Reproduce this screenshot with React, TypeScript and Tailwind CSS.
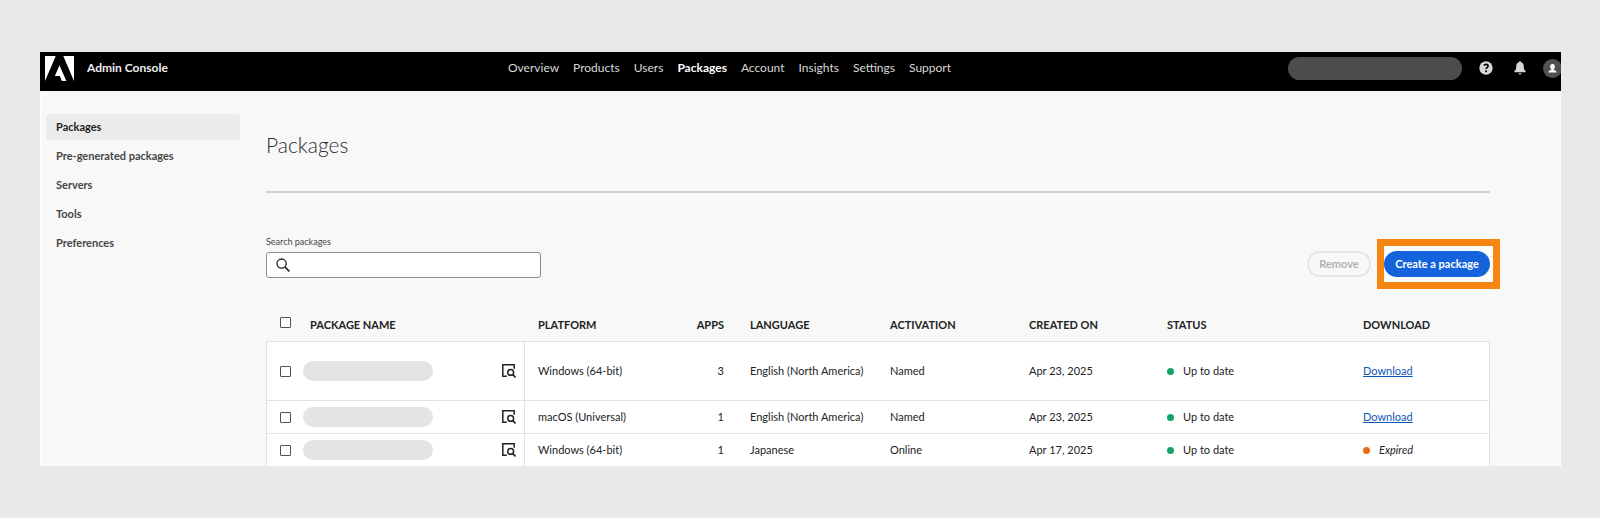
import React from "react";

const NAV = ["Overview", "Products", "Users", "Packages", "Account", "Insights", "Settings", "Support"];
const SIDE = ["Packages", "Pre-generated packages", "Servers", "Tools", "Preferences"];

type Row = {
  platform: string;
  apps: number;
  language: string;
  activation: string;
  created: string;
  expired?: boolean;
  height: string;
};

const ROWS: Row[] = [
  { platform: "Windows (64-bit)", apps: 3, language: "English (North America)", activation: "Named", created: "Apr 23, 2025", height: "h-[59px]" },
  { platform: "macOS (Universal)", apps: 1, language: "English (North America)", activation: "Named", created: "Apr 23, 2025", height: "h-[33px]" },
  { platform: "Windows (64-bit)", apps: 1, language: "Japanese", activation: "Online", created: "Apr 17, 2025", expired: true, height: "h-[33px]" },
];

function AdobeLogo() {
  return (
    <svg viewBox="0 1.376 24 21.248" preserveAspectRatio="none" className="h-[25px] w-[29px]" fill="#fff" aria-hidden="true">
      <path d="M13.966 22.624l-1.69-4.281H8.122l3.892-9.144 5.662 13.425zM8.884 1.376H0v21.248zm6.232 0H24v21.248z" />
    </svg>
  );
}

function HelpIcon() {
  return (
    <svg viewBox="0 0 14 14" className="size-[14px]" aria-hidden="true">
      <circle cx="7" cy="7" r="6.7" fill="#d6d6d6" />
      <path d="M4.9 4.6C5.4 3.7 6.1 3.4 7 3.4c1.2 0 2.1.6 2.1 1.7 0 1.5-2 1.5-2 3" fill="none" stroke="#000" strokeWidth="1.6" />
      <circle cx="7.1" cy="10.3" r="1" fill="#000" />
    </svg>
  );
}

function BellIcon() {
  return (
    <svg viewBox="0 0 12 14" className="h-[14px] w-3" fill="#d6d6d6" aria-hidden="true">
      <path d="M6 .3c.7 0 1 .4 1 1 1.9.5 2.8 2 2.8 4 0 3 .6 4 2 5.1v.9H.2v-.9c1.4-1.1 2-2.1 2-5.1 0-2 .9-3.5 2.8-4 0-.6.3-1 1-1zM4.6 12.3h2.8c-.1.8-.7 1.3-1.4 1.3s-1.3-.5-1.4-1.3z" />
    </svg>
  );
}

function Avatar() {
  return (
    <svg viewBox="0 0 19 19" className="size-[19px]" aria-hidden="true">
      <circle cx="9.5" cy="9.5" r="9.5" fill="#505050" />
      <path d="M9.5 5c1.5 0 2.4 1 2.4 2.5 0 1.3-.5 2-1.2 2.7v.8c1.6.3 2.8.8 3 2.6H5.3c.2-1.8 1.4-2.3 3-2.6v-.8c-.7-.7-1.2-1.4-1.2-2.7C7.1 6 8 5 9.5 5z" fill="#fff" />
    </svg>
  );
}

function PreviewIcon() {
  return (
    <svg viewBox="0 0 14 14" className="size-[14px]" fill="none" stroke="#222" strokeWidth="1.5" aria-hidden="true">
      <path d="M4.8 12.2H.8V.8h11.4v4" />
      <circle cx="8.7" cy="8.4" r="2.9" />
      <path d="M10.8 10.5l2.7 2.9" strokeWidth="1.7" />
    </svg>
  );
}

function Box({ label }: { label: string }) {
  return (
    <input
      type="checkbox"
      aria-label={label}
      className="block size-[11px] appearance-none rounded-[1px] border border-[#505050] bg-white checked:bg-[#1463dc]"
    />
  );
}

export default function App() {
  const cell = "border-t border-[#e1e1e1] px-[13px]";
  return (
    <div className="min-h-screen bg-[#e9e9e9] pt-[52px] pr-[39px] pb-[52px] pl-10 font-['Lato','Noto_Sans',sans-serif] text-[11px] leading-4 text-[#222]">
      <div className="overflow-hidden bg-[#f8f8f8]">
        <header className="flex h-[39px] items-center justify-between overflow-hidden bg-black pb-[7px] pl-[5px]">
          <div className="flex shrink-0 items-center">
            <div className="flex w-[463px] items-center gap-[13px]">
              <AdobeLogo />
              <span className="text-xs font-bold text-[#f0f0f0]">Admin Console</span>
            </div>
            <nav className="flex gap-[14px] text-xs" aria-label="Main">
              {NAV.map((n) => (
                <a key={n} href="#" className={n === "Packages" ? "font-bold text-white" : "text-[#d8d8d8]"}>
                  {n}
                </a>
              ))}
            </nav>
          </div>
          <div className="-mr-px flex shrink-0 items-center">
            <div className="mr-[17px] h-[23px] w-[174px] rounded-full bg-[#4c4c4c]" />
            <button className="mr-[21px]" aria-label="Help"><HelpIcon /></button>
            <button className="mr-[17px]" aria-label="Notifications"><BellIcon /></button>
            <button aria-label="Account"><Avatar /></button>
          </div>
        </header>

        <div className="flex border-x border-white">
          <aside className="w-[225px] shrink-0 pt-[23px] pr-[26px] pl-[5px]">
            <ul className="flex flex-col gap-[3px]">
              {SIDE.map((s, i) => (
                <li key={s}>
                  <a
                    href="#"
                    className={
                      i === 0
                        ? "flex h-[26px] items-center rounded bg-[#ebebeb] px-[10px] font-bold text-[#222]"
                        : "flex h-[26px] items-center rounded px-[10px] font-bold text-[#464646]"
                    }
                  >
                    {s}
                  </a>
                </li>
              ))}
            </ul>
          </aside>

          <main className="min-w-0 flex-1 pr-[70px]">
            <h1 className="pt-10 text-[21px] leading-7 font-light text-[#2c2c2c]">Packages</h1>
            <hr className="mt-8 border-t-2 border-[#d0d0d0]" />

            <div className="mt-[41px] flex items-start justify-between">
              <div className="w-[275px]">
                <label htmlFor="search" className="block text-[9px] leading-4 text-[#464646]">Search packages</label>
                <div className="mt-[2px] flex h-[26px] items-center rounded-[3px] border border-[#8c8c8c] bg-white pl-[9px]">
                  <svg viewBox="0 0 14 14" className="size-[14px] shrink-0" fill="none" stroke="#222" strokeWidth="1.3" aria-hidden="true">
                    <circle cx="5.6" cy="5.6" r="4.6" />
                    <path d="M9 9l4.3 4.3" strokeWidth="1.7" />
                  </svg>
                  <input id="search" type="search" className="min-w-0 flex-1 px-2 outline-none" />
                </div>
              </div>
              <div className="flex items-center gap-[13px] pt-[17px]">
                <button disabled className="h-[26px] w-16 rounded-full border-2 border-[#e6e6e6] font-bold text-[#b1b1b1]">Remove</button>
                <div className="relative">
                  <div className="absolute -top-3 -right-[10px] -bottom-3 -left-[7px] border-7 border-[#f68511] bg-[#fbfbfb]" />
                  <button className="relative h-[26px] w-[106px] rounded-full bg-[#1463dc] font-bold whitespace-nowrap text-white">Create a package</button>
                </div>
              </div>
            </div>

            <table className="mt-[30px] w-full table-fixed border-separate border-spacing-0 text-left">
              <colgroup>
                <col className="w-[37px]" />
                <col className="w-[222px]" />
                <col className="w-[140px]" />
                <col className="w-[72px]" />
                <col className="w-[140px]" />
                <col className="w-[139px]" />
                <col className="w-[138px]" />
                <col className="w-[196px]" />
                <col />
              </colgroup>
              <thead>
                <tr className="h-[33px]">
                  <th className="pb-1 pl-[14px]"><Box label="Select all packages" /></th>
                  <th className="pl-[7px]">PACKAGE NAME</th>
                  <th className="px-[13px]">PLATFORM</th>
                  <th className="px-[13px] text-right">APPS</th>
                  <th className="px-[13px]">LANGUAGE</th>
                  <th className="px-[13px]">ACTIVATION</th>
                  <th className="px-[13px]">CREATED ON</th>
                  <th className="px-[13px]">STATUS</th>
                  <th className="px-[13px]">DOWNLOAD</th>
                </tr>
              </thead>
              <tbody className="whitespace-nowrap">
                {ROWS.map((r, i) => (
                  <tr key={i} className={`bg-white ${r.height}`}>
                    <td className="border-t border-l border-[#e1e1e1] pl-[13px]"><Box label={`Select package ${i + 1}`} /></td>
                    <td className="border-t border-r border-[#e1e1e1] pr-2">
                      <div className="flex items-center justify-between">
                        <span className="h-5 w-[130px] rounded-full bg-[#e4e4e4]" />
                        <button aria-label="View details"><PreviewIcon /></button>
                      </div>
                    </td>
                    <td className={cell}>{r.platform}</td>
                    <td className={`${cell} text-right`}>{r.apps}</td>
                    <td className={cell}>{r.language}</td>
                    <td className={cell}>{r.activation}</td>
                    <td className={cell}>{r.created}</td>
                    <td className={cell}>
                      <span className="flex items-center gap-[9px]">
                        <span className="size-[7px] rounded-full bg-[#12a26c]" />
                        Up to date
                      </span>
                    </td>
                    <td className="border-t border-r border-[#e1e1e1] px-[13px]">
                      {r.expired ? (
                        <span className="flex items-center gap-[9px] italic">
                          <span className="size-[7px] rounded-full bg-[#e46f16]" />
                          Expired
                        </span>
                      ) : (
                        <a href="#" className="text-[#0d57b8] underline">Download</a>
                      )}
                    </td>
                  </tr>
                ))}
              </tbody>
            </table>
          </main>
        </div>
      </div>
    </div>
  );
}
